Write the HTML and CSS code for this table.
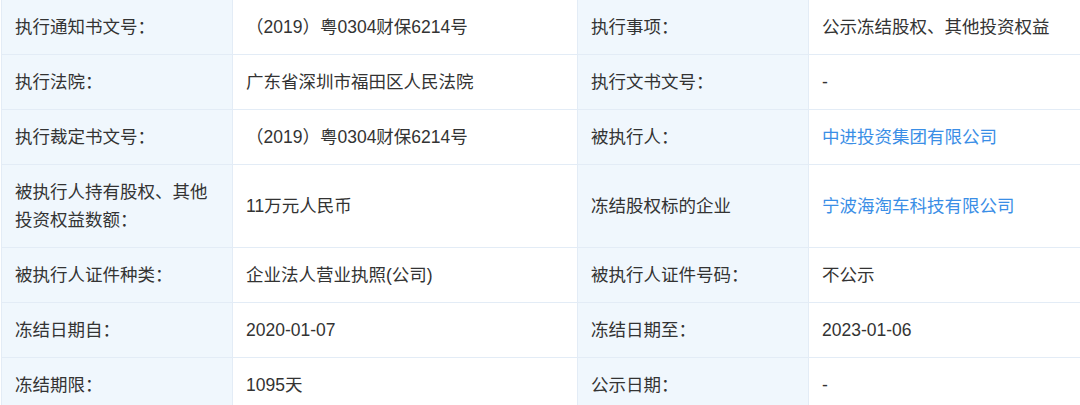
FILE: index.html
```html
<!DOCTYPE html>
<html lang="zh-CN">
<head>
<meta charset="utf-8">
<title>冻结信息</title>
<link rel="stylesheet" href="styles.css">
</head>
<body>
<table class="info">
  <colgroup>
    <col class="c-label1">
    <col class="c-value1">
    <col class="c-label2">
    <col class="c-value2">
  </colgroup>
  <tbody>
    <tr>
      <td class="label">执行通知书文号：</td>
      <td class="value">（2019）粤0304财保6214号</td>
      <td class="label">执行事项：</td>
      <td class="value">公示冻结股权、其他投资权益</td>
    </tr>
    <tr>
      <td class="label">执行法院：</td>
      <td class="value">广东省深圳市福田区人民法院</td>
      <td class="label">执行文书文号：</td>
      <td class="value">-</td>
    </tr>
    <tr>
      <td class="label">执行裁定书文号：</td>
      <td class="value">（2019）粤0304财保6214号</td>
      <td class="label">被执行人：</td>
      <td class="value"><a class="link" href="#">中进投资集团有限公司</a></td>
    </tr>
    <tr>
      <td class="label">被执行人持有股权、其他投资权益数额：</td>
      <td class="value">11万元人民币</td>
      <td class="label">冻结股权标的企业</td>
      <td class="value"><a class="link" href="#">宁波海淘车科技有限公司</a></td>
    </tr>
    <tr>
      <td class="label">被执行人证件种类：</td>
      <td class="value">企业法人营业执照(公司)</td>
      <td class="label">被执行人证件号码：</td>
      <td class="value">不公示</td>
    </tr>
    <tr>
      <td class="label">冻结日期自：</td>
      <td class="value">2020-01-07</td>
      <td class="label">冻结日期至：</td>
      <td class="value">2023-01-06</td>
    </tr>
    <tr>
      <td class="label">冻结期限：</td>
      <td class="value">1095天</td>
      <td class="label">公示日期：</td>
      <td class="value">-</td>
    </tr>
  </tbody>
</table>
</body>
</html>
```
FILE: styles.css
```css
html, body {
  margin: 0;
  padding: 0;
  background: #ffffff;
}

body {
  font-family: "Liberation Sans", "Noto Sans CJK SC", sans-serif;
  font-size: 17.5px;
  color: #333333;
  overflow: hidden;
}

.info {
  margin-left: 1px;
  width: 1100px;
  border-collapse: collapse;
  table-layout: fixed;
}

.c-label1 { width: 231px; }
.c-value1 { width: 345px; }
.c-label2 { width: 231px; }
.c-value2 { width: 293px; }

.info td {
  border: 1px solid #e3ecf6;
  padding: 13px 14px 13px 13px;
  line-height: 28px;
  vertical-align: middle;
  text-align: left;
}

.info tr:first-child td {
  border-top: none;
}

.label {
  background: #f0f7fd;
}

.value {
  background: #ffffff;
}

.link {
  color: #3a8ee6;
  text-decoration: none;
}
```
